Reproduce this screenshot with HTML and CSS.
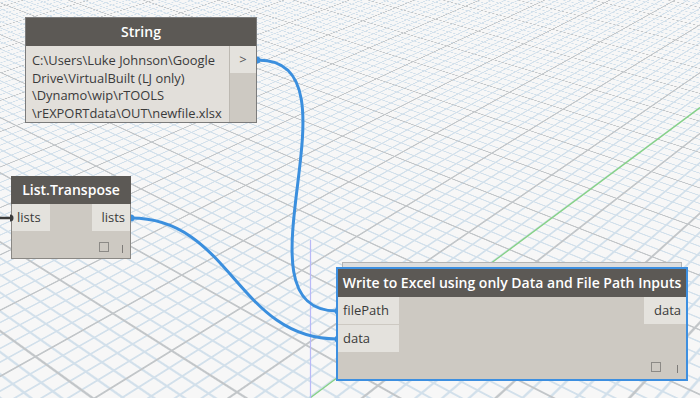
FILE: index.html
```html
<!DOCTYPE html>
<html>
<head>
<meta charset="utf-8">
<link rel="stylesheet" href="styles.css">
</head>
<body>
<div class="workspace">
  <div class="grid-view"><div class="grid-plane"></div></div>

  <svg class="axes" width="700" height="398" viewBox="0 0 700 398">
    <line x1="700" y1="107.6" x2="310" y2="398" stroke="#86d286" stroke-width="1.3"/>
    <line x1="310.5" y1="240" x2="310.5" y2="398" stroke="#b9b9f7" stroke-width="1.2"/>
  </svg>

  <div class="node node-string">
    <div class="node-header">String</div>
    <div class="node-body">
      <div class="string-value">C:\Users\Luke Johnson\Google<br>Drive\VirtualBuilt (LJ only)<br>\Dynamo\wip\rTOOLS<br>\rEXPORTdata\OUT\newfile.xlsx</div>
      <div class="out-col"><div class="port port-out">&gt;</div></div>
    </div>
  </div>

  <div class="node node-transpose">
    <div class="node-header">List.Transpose</div>
    <div class="node-body ports">
      <div class="port-col"><div class="port">lists</div></div>
      <div class="port-col right"><div class="port">lists</div></div>
    </div>
    <div class="node-footer"><span class="foot-square"></span><span class="foot-bar"></span></div>
  </div>

  <div class="node-stack"></div>
  <div class="node node-excel">
    <div class="node-header">Write to Excel using only Data and File Path Inputs</div>
    <div class="node-body ports">
      <div class="port-col"><div class="port">filePath</div><div class="port">data</div></div>
      <div class="port-col right"><div class="port">data</div></div>
    </div>
    <div class="node-footer"><span class="foot-square"></span><span class="foot-bar"></span></div>
  </div>

  <svg class="wires" width="700" height="398" viewBox="0 0 700 398">
    <path d="M0,218 L12,218" stroke="#3a3a3a" stroke-width="2.5" fill="none"/>
    <path d="M10,214.5 A3.5,3.5 0 0 1 10,221.5 Z" fill="#3a3a3a"/>
    <path d="M258,60 C368,60 227,311 337,311" stroke="#3b8fde" stroke-width="3" fill="none"/>
    <path d="M131,218 C231,218 237,339 337,339" stroke="#3b8fde" stroke-width="3" fill="none"/>
    <path d="M257,56.5 A3.5,3.5 0 0 1 257,63.5 Z" fill="#3b8fde"/>
    <path d="M131,214.5 A3.5,3.5 0 0 1 131,221.5 Z" fill="#3b8fde"/>
    <path d="M338,307.5 A3.5,3.5 0 0 0 338,314.5 Z" fill="#3b8fde"/>
    <path d="M338,335.5 A3.5,3.5 0 0 0 338,342.5 Z" fill="#3b8fde"/>
  </svg>
</div>
</body>
</html>
```

FILE: styles.css
```css
html, body {
  margin: 0;
  padding: 0;
}

body {
  width: 700px;
  height: 398px;
  overflow: hidden;
  background: #f7f7f7;
  font-family: "Open Sans", "DejaVu Sans", sans-serif;
}

.workspace {
  position: relative;
  width: 700px;
  height: 398px;
  overflow: hidden;
  background: #f7f7f7;
}

.grid-view {
  position: absolute;
  inset: 0;
  perspective: 1000px;
  perspective-origin: 50% 50%;
  overflow: hidden;
}

.grid-plane {
  position: absolute;
  left: 50%;
  top: 50%;
  width: 2600px;
  height: 2600px;
  margin: -1300px 0 0 -1300px;
  transform: rotateX(60deg) rotateZ(41deg);
  background:
    linear-gradient(90deg, #c2c6c9 1.8px, transparent 1.8px) 0 0 / 75px 75px,
    linear-gradient(0deg, #c2c6c9 1.8px, transparent 1.8px) 0 0 / 75px 75px,
    linear-gradient(90deg, #d2e0eb 1.6px, transparent 1.6px) 0 0 / 15px 15px,
    linear-gradient(0deg, #d2e0eb 1.6px, transparent 1.6px) 0 0 / 15px 15px,
    #f7f7f7;
}

.axes, .wires {
  position: absolute;
  left: 0;
  top: 0;
}

.node {
  position: absolute;
  display: flex;
  flex-direction: column;
  background: #cdc9c2;
  box-sizing: border-box;
  color: #3a3a3a;
}

.node-header {
  background: #5c5955;
  color: #ffffff;
  font-weight: 600;
  font-size: 14px;
  height: 28px;
  line-height: 28px;
  text-align: center;
  white-space: nowrap;
}

.node-string {
  left: 25px;
  top: 17px;
  width: 232px;
  height: 106px;
  border: 1px solid #7b7b7b;
}

.node-string .node-body {
  display: flex;
  flex: 1;
}

.string-value {
  flex: 1;
  background: #e2dfda;
  font-size: 12.9px;
  line-height: 17.5px;
  padding: 6px 0 0 6px;
  white-space: nowrap;
  border-right: 1px solid #bdb9b2;
}

.out-col {
  width: 26px;
  display: flex;
  flex-direction: column;
}

.port {
  font-size: 13px;
  height: 27px;
  line-height: 27px;
  padding: 0 5px;
  background: #e4e2dd;
  white-space: nowrap;
  box-sizing: border-box;
}

.port-out {
  text-align: center;
  padding: 0;
  color: #555;
}

.ports {
  display: flex;
  justify-content: space-between;
}

.port-col {
  display: flex;
  flex-direction: column;
  gap: 1px;
}

.node-footer {
  flex: 1;
  display: flex;
  justify-content: flex-end;
  align-items: flex-end;
  gap: 13px;
  padding: 0 7px 6px 0;
}

.foot-square {
  width: 8px;
  height: 8px;
  border: 1px solid #8c8a86;
}

.foot-bar {
  width: 1px;
  height: 8px;
  background: #7d7b78;
  margin-bottom: -1px;
}

.node-transpose {
  left: 11px;
  top: 176px;
  width: 120px;
  height: 83px;
  border: 1px solid #8a8884;
  border-top: none;
}

.node-transpose .node-header {
  margin: 0 -1px;
}

.node-transpose .port:first-child {
  width: 38px;
}

.node-transpose .right .port {
  width: 38px;
  text-align: right;
}

.node-stack {
  position: absolute;
  left: 342px;
  top: 262px;
  width: 340px;
  height: 10px;
  box-sizing: border-box;
  border: 1px solid #b3b3b3;
  background: #dedede;
  box-shadow: 0 2px 0 0 #c9c9c9;
}

.node-excel {
  left: 336px;
  top: 267px;
  width: 352px;
  height: 114px;
  border: 2px solid #3d8fe0;
}

.node-excel .port-col:first-child .port {
  width: 61px;
}

.node-excel .right .port {
  width: 42px;
  text-align: right;
}

.node-excel .node-footer {
  padding: 0 8px 7px 0;
  gap: 16px;
}
```
